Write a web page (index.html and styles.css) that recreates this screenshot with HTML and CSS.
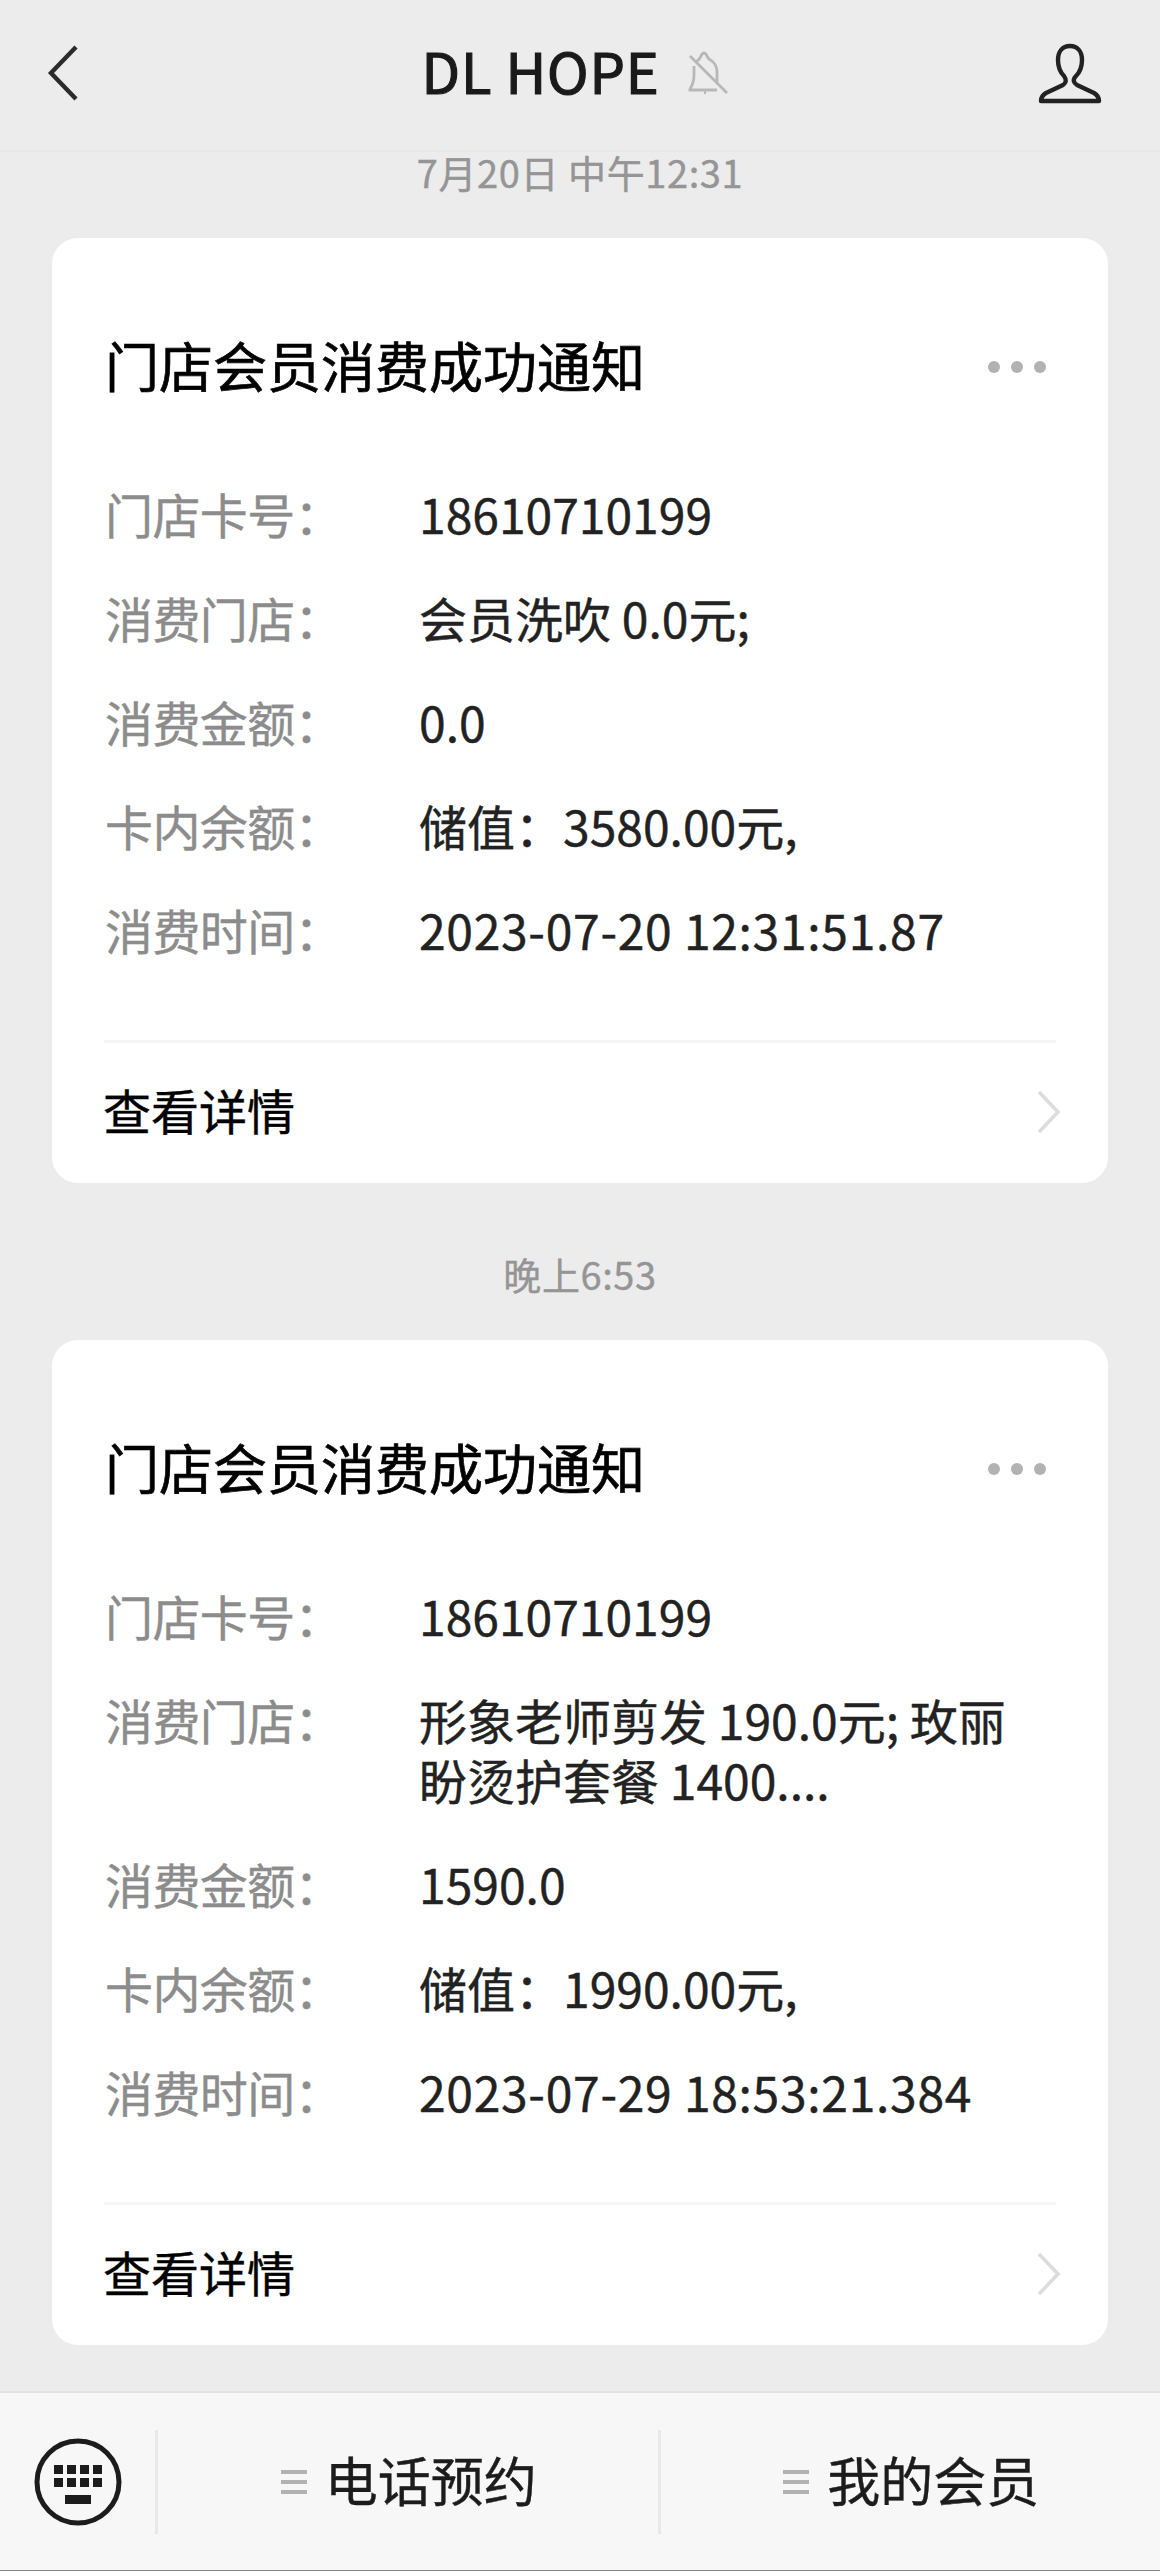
FILE: index.html
```html
<!DOCTYPE html>
<html lang="zh-CN">
<head>
    <meta charset="UTF-8">
    <meta name="viewport" content="width=device-width, initial-scale=1.0">
    <title>DL HOPE</title>
    <link rel="stylesheet" href="styles.css">
</head>
<body>
    <header class="header">
        <svg class="icon-back" viewBox="0 0 32 56" fill="none" stroke="#2b2b2b" stroke-width="4.4">
            <path d="M29 2L4 28L29 54"/>
        </svg>
        <div class="header-title">
            <h1>DL HOPE</h1>
            <svg class="icon-mute" viewBox="0 0 42 46" fill="none" stroke="#b8b8b8" stroke-width="2.8">
                <path d="M9 12Q13 9 14 6Q17 0 20 6Q21 9 25 11Q30 15 30 22V33M7 16V25Q7 33 3 39V40H30M3 6L40 43M17 42.500H19"/>
            </svg>
        </div>
        <svg class="icon-user" viewBox="0 0 64 62" fill="none" stroke="#222" stroke-width="4.4" stroke-linejoin="round">
            <path d="M32 4C24 4 20 10 20 18C20 26 22 30 26 34C29 38 28 41 25 43L8 51Q3 54 3 59H61Q61 54 56 51L39 43C36 41 34 38 38 34C42 30 44 26 44 18C44 10 40 4 32 4Z"/>
        </svg>
    </header>

    <main class="chat">
        <div class="time">7月20日 中午12:31</div>

        <section class="card">
            <div class="card-head">
                <h2>门店会员消费成功通知</h2>
                <div class="dots"><i></i><i></i><i></i></div>
            </div>
            <dl class="rows">
                <dt>门店卡号：</dt><dd>18610710199</dd>
                <dt>消费门店：</dt><dd>会员洗吹 0.0元;</dd>
                <dt>消费金额：</dt><dd>0.0</dd>
                <dt>卡内余额：</dt><dd>储值：3580.00元,</dd>
                <dt>消费时间：</dt><dd class="date">2023-07-20 12:31:51.87</dd>
            </dl>
            <div class="card-link">
                <span>查看详情</span>
                <svg class="icon-next" viewBox="0 0 24 44" fill="none" stroke="#dcdcdc" stroke-width="3.500">
                    <path d="M2 2L21 22L2 42"/>
                </svg>
            </div>
        </section>

        <div class="time time-second">晚上6:53</div>

        <section class="card">
            <div class="card-head">
                <h2>门店会员消费成功通知</h2>
                <div class="dots"><i></i><i></i><i></i></div>
            </div>
            <dl class="rows">
                <dt>门店卡号：</dt><dd>18610710199</dd>
                <dt>消费门店：</dt><dd>形象老师剪发 190.0元; 玫丽<br>盼烫护套餐 1400....</dd>
                <dt>消费金额：</dt><dd>1590.0</dd>
                <dt>卡内余额：</dt><dd>储值：1990.00元,</dd>
                <dt>消费时间：</dt><dd class="date">2023-07-29 18:53:21.384</dd>
            </dl>
            <div class="card-link">
                <span>查看详情</span>
                <svg class="icon-next" viewBox="0 0 24 44" fill="none" stroke="#dcdcdc" stroke-width="3.500">
                    <path d="M2 2L21 22L2 42"/>
                </svg>
            </div>
        </section>
    </main>

    <footer class="menu">
        <div class="menu-keyboard">
            <svg class="icon-keyboard" viewBox="0 0 88 88" fill="#1c1c1c">
                <circle cx="44" cy="44" r="41" fill="none" stroke="#1c1c1c" stroke-width="5"/>
                <path d="M20 27h9v9h-9zM33 27h9v9h-9zM46 27h9v9h-9zM59 27h9v9h-9zM20 40h9v9h-9zM33 40h9v9h-9zM46 40h9v9h-9zM59 40h9v9h-9zM31 57h26v9h-26z"/>
            </svg>
        </div>
        <div class="menu-item">
            <div class="lines"><i></i><i></i><i></i></div>
            <span>电话预约</span>
        </div>
        <div class="menu-item">
            <div class="lines"><i></i><i></i><i></i></div>
            <span>我的会员</span>
        </div>
    </footer>
</body>
</html>
```
FILE: styles.css
```css
* {
    box-sizing: border-box;
    margin: 0;
    padding: 0;
}
body {
    display: flex;
    flex-direction: column;
    height: 2571px;
    background-color: #ececec;
    color: #222;
    font-family: "Noto Sans CJK SC", sans-serif;
    font-size: 48px;
    line-height: 60px;
    -webkit-text-stroke: 0.4px;
}
svg {
    display: block;
    flex: none;
}

/* header */
.header {
    display: flex;
    align-items: center;
    justify-content: space-between;
    height: 152px;
    padding: 0 58px 4px 47px;
    border-bottom: 2px solid #e8e8e8;
}
.header-title {
    display: flex;
    align-items: center;
    gap: 28px;
    margin-left: 34px;
}
.header-title h1 {
    padding-bottom: 6px;
    font-size: 56px;
    font-weight: 400;
    letter-spacing: 0.8px;
    color: #1a1a1a;
    -webkit-text-stroke: 1.2px;
}
.icon-back { width: 32px; height: 56px; }
.icon-mute { width: 42px; height: 46px; }
.icon-user { width: 64px; height: 62px; }

/* messages */
.chat {
    flex: 1;
    padding: 0 52px;
}
.time {
    height: 86px;
    line-height: 40px;
    font-size: 38px;
    letter-spacing: 0.6px;
    text-align: center;
    color: #959595;
}
.time-second {
    height: 157px;
    padding-top: 71px;
}
.card {
    background: #fff;
    border-radius: 26px;
    padding: 0 52px;
}
.card-head {
    display: flex;
    align-items: center;
    justify-content: space-between;
    padding: 99px 10px 0 1px;
}
.card-head h2 {
    height: 60px;
    line-height: 56px;
    font-size: 54px;
    font-weight: 400;
    color: #000;
    -webkit-text-stroke: 0.7px;
}
.dots {
    display: flex;
    gap: 11px;
}
.dots i {
    width: 12px;
    height: 12px;
    border-radius: 50%;
    background: #b2b2b2;
}
.rows {
    display: grid;
    grid-template-columns: 314px 1fr;
    row-gap: 44px;
    padding: 86px 0 81px 1px;
    white-space: nowrap;
}
.rows dt {
    color: #8c8c8c;
    letter-spacing: -0.6px;
}
.rows .date {
    letter-spacing: 0.7px;
}
.card-link {
    display: flex;
    align-items: center;
    justify-content: space-between;
    height: 143px;
    margin-right: -5px;
    color: #000;
    background: linear-gradient(#f5f5f5, #f5f5f5) no-repeat 0 0 / 952px 3px;
}
.card-link span {
    padding-bottom: 5px;
    margin-left: -1px;
}
.icon-next { width: 24px; height: 44px; }

/* bottom menu */
.menu {
    display: flex;
    align-items: center;
    height: 180px;
    background: #f7f7f7;
    border-top: 2px solid #e2e2e2;
    border-bottom: 1px solid #888;
    color: #1c1c1c;
    font-size: 53px;
}
.menu-keyboard {
    width: 155px;
    padding-left: 34px;
}
.icon-keyboard { width: 88px; height: 88px; }
.menu-item {
    flex: 1;
    display: flex;
    align-items: center;
    justify-content: center;
    gap: 18px;
    height: 104px;
    padding-left: 2px;
    border-left: 3px solid #e8e8e8;
}
.menu-item span {
    padding-bottom: 5px;
}
.lines {
    display: flex;
    flex-direction: column;
    gap: 6px;
}
.lines i {
    width: 26px;
    height: 4px;
    background: #b2b2b2;
}
```
